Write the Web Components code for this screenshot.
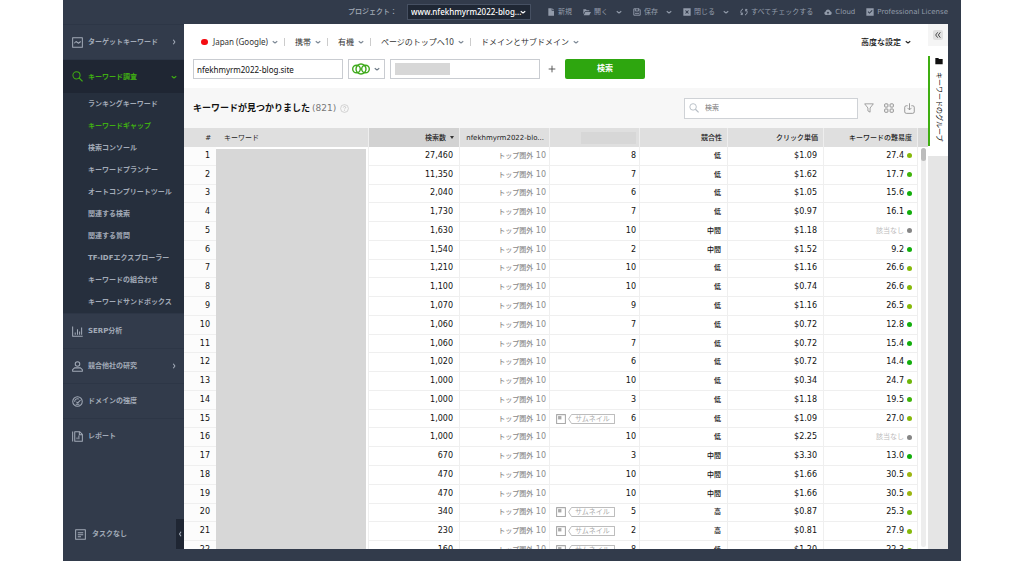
<!DOCTYPE html>
<html lang="ja">
<head>
<meta charset="utf-8">
<title>キーワードギャップ</title>
<style>
  html, body { height: 100%; margin: 0; }
  body {
    --narrow: "Noto Sans", "Noto Sans CJK JP", sans-serif;
    background: #fff;
    font-family: "DejaVu Sans", "Noto Sans CJK JP", sans-serif;
    font-size: 8px;
    line-height: 12px;
    overflow: hidden;
  }
</style>
</head>
<body>
<seo-app></seo-app>
<script>
const S = (w, body, extra = '') =>
  `<svg width="${w}" height="${w}" viewBox="0 0 12 12" fill="none" stroke="currentColor" stroke-width="1.1" stroke-linejoin="round" ${extra}>${body}</svg>`;
const ICONS = {
  down: '<path d="M1.500 4.500 6 8l4.500-3.500" stroke-width="2.200"/>',
  right: '<path d="M4.500 1.500 7.800 6l-3.300 4.500" stroke-width="2.200"/>',
  left: '<path d="M8 1.500 5 6l3 4.500" stroke-width="2.200"/>',
  target: '<rect x=".7" y=".7" width="10.600" height="10.600"/><path d="m2.500 6.800 1.900-1.900 2.700 1.900 2.400-1.900"/>',
  search: '<circle cx="4.900" cy="4.700" r="3.900"/><path d="m7.700 7.500 3.800 3.800" stroke-width="1.400"/>',
  serp: '<path d="M.7.5v10.800h11M3.500 9.500V7M6 9.500V3.500M8.300 9.500V6M10.500 9.500V1.500"/>',
  person: '<circle cx="6" cy="3.200" r="2.500"/><path d="M2.800 7.500h6.400l2.100 2v1.800H.7V9.500z"/>',
  gauge: '<circle cx="6" cy="6" r="5.200"/><path d="M3 6.500A3 3 0 0 1 7.500 3.400M9.300 4.500 6.200 7.600 4.800 6.400M4 9h4"/>',
  report: '<path d="M.7.5v11M3 .8h5.500l2.800 2.800v7.600H3zM8 1v3h3M5.500 9V7M7.500 9V5"/>',
  tasks: '<rect x=".7" y=".7" width="10.600" height="10.600"/><path d="M3 4h6M3 6.200h6M3 8.400h3.500"/>',
  file: '<path d="M2 .5h5v3.500h3.500v7.500H2z" fill="currentColor" stroke="none"/><path d="M8 .5 10.500 3H8z" fill="currentColor" stroke="none"/>',
  open: '<path d="M.5 2h4l1 1.500h4V5H3L.5 9.500zM3.500 6H12l-2.500 5H1z" fill="currentColor" stroke="none"/>',
  save: '<path d="M1.200 1.200h8l1.600 1.600v8H1.200z" stroke-width="1.400"/><path d="M3.500 1v3.500h5V1M3 8h6" stroke-width="1.400"/>',
  close: '<path fill="currentColor" fill-rule="evenodd" stroke="none" d="M.5.5h11v11H.5zM3.200 4.200 5 6 3.200 7.800l1 1L6 7l1.800 1.800 1-1L7 6l1.800-1.800-1-1L6 5 4.200 3.200z"/>',
  sync: '<path d="M4.500 1.500A4.600 4.600 0 0 0 3 9.500M1 9.700l2.500.3V7M7.500 10.500A4.600 4.600 0 0 0 9 2.500M11 2.300 8.500 2v3" stroke-width="1.500"/>',
  cloud: '<path fill="currentColor" fill-rule="evenodd" stroke="none" d="M3 10.500a2.700 2.700 0 0 1-.5-5.300 3.600 3.600 0 0 1 7-.2A2.800 2.800 0 0 1 9 10.500zM5.300 9.500h1.400V7.500H8L6 5.200 4 7.500h1.300z"/>',
  check: '<path fill="currentColor" fill-rule="evenodd" stroke="none" d="M.5.5h11v11H.5zM2.500 6 5.200 8.800 9.800 4 8.700 3 5.200 6.700 3.500 5z"/>',
  help: '<circle cx="6" cy="6" r="5.200" stroke-width=".8"/><path d="M4.400 4.800c0-2.200 3.300-2 3.200-.1C7.500 5.800 6 5.700 6 7.300M6 8.300v1" stroke-width=".9"/>',
  funnel: '<path d="M.8 1h10.400L7.300 6v5L4.700 9.500V6z" stroke-width=".9"/>',
  grid: '<rect x=".8" y="1" width="3.900" height="3.900" rx=".8"/><rect x="7.300" y="1" width="3.900" height="3.900" rx=".8"/><rect x=".8" y="7.200" width="3.900" height="3.900" rx=".8"/><rect x="7.300" y="7.200" width="3.900" height="3.900" rx=".8"/>',
  export: '<path d="M4 3H2.500A1.700 1.700 0 0 0 .8 4.700v5A1.700 1.700 0 0 0 2.500 11.300h7a1.700 1.700 0 0 0 1.700-1.600v-5A1.700 1.700 0 0 0 9.500 3H8M6 .3v7M3.800 5.300 6 7.500l2.200-2.200" stroke-width=".9"/>',
  folder: '<path d="M.5 1.500h4.500l1 1.500h5.500v8H.5z" fill="currentColor" stroke="none"/>',
  thumb: '<rect x=".7" y=".7" width="10.600" height="10.600" stroke-width="1.300"/><path d="M2.500 2.500h4v4h-4z" fill="currentColor" stroke="none"/>',
  plus: '<path d="M6 1v10M1 6h10" stroke-width="1.300"/>',
  dbl: '<path d="M5.500 2 2.500 6l3 4M9.500 2l-3 4 3 4" stroke-width="1.300"/>'
};
const BASE = `<style>
  *, *::before, *::after { box-sizing: border-box; }
  button, input, select { font: inherit; color: inherit; margin: 0; padding: 0; border: 0; background: none; border-radius: 0; }
  input { min-width: 0; outline: none; }
  a { color: inherit; text-decoration: none; }
</style>`;

function define(name, html) {
  customElements.define(name, class extends HTMLElement {
    constructor() {
      super();
      const root = this.attachShadow({ mode: 'open' });
      const t = document.createElement('template');
      t.innerHTML = BASE + (typeof html === 'function' ? html(this) : html);
      root.append(t.content.cloneNode(true));
    }
  });
}

customElements.define('ui-icon', class extends HTMLElement {
  connectedCallback() {
    if (this.shadowRoot) return;
    const size = this.getAttribute('size') || 10;
    this.attachShadow({ mode: 'open' }).innerHTML =
      `<style>:host{display:inline-flex;flex:none}svg{display:block}</style>` +
      S(size, ICONS[this.getAttribute('name')], 'aria-hidden="true"');
  }
});

define('top-bar', `
<style>
  :host { display: flex; align-items: center; justify-content: flex-end; height: 24px; padding-right: 13px; color: #a3abb8; font-size: 7px; }
  .project { display: flex; align-items: center; gap: 10px; margin-right: 16px; font-weight: 500; }
  .picker { display: grid; align-items: center; width: 124px; height: 16px; background: #1f2734; border: 1px solid #465062; color: #fff; }
  select, .picker ui-icon { grid-area: 1 / 1; }
  select { appearance: none; width: 100%; height: 14px; padding-left: 3px; font-family: var(--narrow); font-size: 8px; }
  .picker ui-icon { justify-self: end; margin-right: 4px; pointer-events: none; }
  nav { display: flex; align-items: center; color: #929baa; }
  button, a { display: flex; align-items: center; gap: 3px; white-space: nowrap; }
  .mr { margin-right: 11px; } .sm { margin-right: 8px; }
</style>
<div class="project"><label for="p">プロジェクト：</label>
  <div class="picker"><select id="p"><option>www.nfekhmyrm2022-blog...</option></select><ui-icon name="down" size="6"></ui-icon></div></div>
<nav>
  <button class="mr"><ui-icon name="file" size="8"></ui-icon>新規</button>
  <button class="sm"><ui-icon name="open" size="8"></ui-icon>開く</button>
  <button class="mr" aria-label="開くメニュー"><ui-icon name="down" size="6"></ui-icon></button>
  <button class="sm"><ui-icon name="save" size="8"></ui-icon>保存</button>
  <button class="mr" aria-label="保存メニュー"><ui-icon name="down" size="6"></ui-icon></button>
  <button class="sm"><ui-icon name="close" size="8"></ui-icon>閉じる</button>
  <button class="mr" aria-label="閉じるメニュー"><ui-icon name="down" size="6"></ui-icon></button>
  <button class="mr"><ui-icon name="sync" size="8"></ui-icon>すべてチェックする</button>
  <a class="mr" href="#cloud"><ui-icon name="cloud" size="8"></ui-icon>Cloud</a>
  <a href="#license"><ui-icon name="check" size="8"></ui-icon>Professional License</a>
</nav>`);

define('side-item', el => `
<style>
  :host { display: block; height: 35px; border-top: 1px solid #2d3646; color: #a3abb8; font-weight: 700; }
  :host([open]) { height: 34px; background: #1f2633; color: #3fae12; }
  a { display: flex; align-items: center; height: 100%; gap: 5px; padding: 0 7px 0 9px; }
  .arrow { margin-left: auto; }
</style>
<a href="#section"><ui-icon name="${el.getAttribute('icon')}" size="11"></ui-icon><slot></slot>${
  el.hasAttribute('arrow') ? `<ui-icon class="arrow" size="6" name="${el.getAttribute('arrow')}"></ui-icon>` : ''}</a>`);

define('side-menu', `
<style>
  :host { display: flex; flex-direction: column; color: #a3abb8; font-size: 7px; }
  ul { list-style: none; margin: 0; padding: 0; background: #262f3d; font-weight: 700; }
  li a { display: flex; align-items: center; height: 22px; padding-left: 25px; white-space: nowrap; }
  .on { color: #3fae12; }
  footer { display: flex; align-items: center; justify-content: space-between; height: 30px; margin-top: auto; padding-left: 12px; font-weight: 700; }
  footer a { display: flex; align-items: center; gap: 6px; }
  footer button { display: flex; align-items: center; justify-content: center; width: 8px; height: 30px; background: #1f2633; }
</style>
<side-item icon="target" arrow="right">ターゲットキーワード</side-item>
<side-item icon="search" arrow="down" open>キーワード調査</side-item>
<ul>${['ランキングキーワード', 'キーワードギャップ', '検索コンソール', 'キーワードプランナー', 'オートコンプリートツール', '関連する検索', '関連する質問', 'TF-IDFエクスプローラー', 'キーワードの組合わせ', 'キーワードサンドボックス']
  .map((t, i) => `<li><a href="#tool"${i === 1 ? ' class="on" aria-current="page"' : ''}>${t}</a></li>`).join('')}</ul>
<side-item icon="serp">SERP分析</side-item>
<side-item icon="person" arrow="right">競合他社の研究</side-item>
<side-item icon="gauge">ドメインの強度</side-item>
<side-item icon="report">レポート</side-item>
<footer><a href="#tasks"><ui-icon name="tasks" size="11"></ui-icon>タスクなし</a>
<button aria-label="メニューを閉じる"><ui-icon name="left" size="6"></ui-icon></button></footer>`);

define('filter-bar', `
<style>
  :host { display: flex; align-items: center; height: 35px; padding: 0 17px; color: #333; font-family: var(--narrow); }
  button { display: flex; align-items: center; gap: 4px; white-space: nowrap; }
  button ui-icon { color: #7b8794; }
  i { width: 1px; height: 8px; margin: 0 10px 0 6px; background: #ccc; }
  .flag { width: 7px; height: 6px; margin-right: 1px; border-radius: 3px; background: #f40d12; }
  .adv { margin-left: auto; font-weight: 500; color: #111; }
  .adv ui-icon { color: #222; }
</style>
<button><span class="flag"></span>Japan (Google)<ui-icon name="down" size="6"></ui-icon></button><i></i>
<button>携帯<ui-icon name="down" size="6"></ui-icon></button><i></i>
<button>有機<ui-icon name="down" size="6"></ui-icon></button><i></i>
<button>ページのトップへ10<ui-icon name="down" size="6"></ui-icon></button><i></i>
<button>ドメインとサブドメイン<ui-icon name="down" size="6"></ui-icon></button>
<button class="adv">高度な設定<ui-icon name="down" size="6"></ui-icon></button>`);

define('domain-form', `
<style>
  :host { display: block; padding: 0 9px 9px; }
  form { display: flex; align-items: center; gap: 5px; }
  .box { height: 20px; border: 1px solid #c9ccd1; background: #fff; }
  input.box { width: 150px; padding: 0 3px; color: #111; font-family: var(--narrow); }
  .mode { display: flex; align-items: center; justify-content: space-between; width: 37px; padding: 0 4px 0 3px; color: #6b7885; }
  .mode svg { display: block; }
  .other { display: flex; align-items: center; width: 150px; padding-left: 4px; }
  .mask { width: 55px; height: 12px; background: #d7d7d7; }
  .other input { flex: 1; }
  .add { display: flex; margin: 0 4px 0 3px; color: #444; }
  .go { width: 80px; height: 20px; border-radius: 2px; background: #2ea60f; color: #fff; font-weight: 700; }
</style>
<form onsubmit="return false">
  <input class="box" aria-label="ドメイン" value="nfekhmyrm2022-blog.site">
  <button type="button" class="box mode" aria-label="比較モード">
    <svg width="18" height="12" viewBox="0 0 18 12" fill="none" stroke="#3faa1c" stroke-width="1.400"><circle cx="4.500" cy="6" r="3.800"/><circle cx="13.500" cy="6" r="3.800"/><circle cx="9" cy="6" r="5"/></svg>
    <ui-icon name="down" size="6"></ui-icon></button>
  <div class="box other"><span class="mask"></span><input aria-label="競合ドメイン"></div>
  <button type="button" class="add" aria-label="追加"><ui-icon name="plus" size="8"></ui-icon></button>
  <button class="go">検索</button>
</form>`);

define('result-bar', `
<style>
  :host { display: flex; align-items: center; height: 40px; padding: 0 13px 0 9px; background: #f7f7f7; color: #888; }
  h1 { margin: 0; font-size: 9px; font-weight: 700; color: #111; }
  .count { margin: 0 4px 0 2px; font-size: 9px; color: #777; }
  .help { color: #bbb; }
  .find { display: flex; align-items: center; gap: 6px; width: 174px; height: 21px; margin-left: auto; padding: 0 4px; background: #fff; border: 1px solid #cfd2d6; color: #b5bcc4; }
  .find input { flex: 1; color: #555; font-size: 7px; }
  .find input::placeholder { color: #777; }
  .tools { display: flex; gap: 10px; margin-left: 6px; }
  button { display: flex; }
</style>
<h1>キーワードが見つかりました</h1><span class="count">(821)</span><ui-icon class="help" name="help" size="9"></ui-icon>
<label class="find"><ui-icon name="search" size="10"></ui-icon><input type="search" placeholder="検索" aria-label="検索"></label>
<div class="tools">
  <button aria-label="フィルター"><ui-icon name="funnel" size="10"></ui-icon></button>
  <button aria-label="表示"><ui-icon name="grid" size="10"></ui-icon></button>
  <button aria-label="エクスポート"><ui-icon name="export" size="11"></ui-icon></button>
</div>`);

const ROWS = `27,460|8|低|$1.09|27.4
11,350|7|低|$1.62|17.7
2,040|6|低|$1.05|15.6
1,730|7|低|$0.97|16.1
1,630|10|中間|$1.18|
1,540|2|中間|$1.52|9.2
1,210|10|低|$1.16|26.6
1,100|10|低|$0.74|26.6
1,070|9|低|$1.16|26.5
1,060|7|低|$0.72|12.8
1,060|7|低|$0.72|15.4
1,020|6|低|$0.72|14.4
1,000|10|低|$0.34|24.7
1,000|3|低|$1.18|19.5
1,000|6*|低|$1.09|27.0
1,000|10|低|$2.25|
670|3|中間|$3.30|13.0
470|10|中間|$1.66|30.5
470|10|中間|$1.66|30.5
340|5*|高|$0.87|25.3
230|2*|高|$0.81|27.9
160|8*|低|$1.20|22.3`.split('\n').map(r => r.split('|'));

const dot = v => !v ? '#858585' : v > 29 ? '#9cb512' : v > 26 ? '#86b90a' : v > 22 ? '#6fb50a' : v > 17 ? '#3fb30a' : '#12ad0c';
const TAG = `<span class="tag"><ui-icon name="thumb" size="10"></ui-icon><span class="chip"><svg width="5" height="10" viewBox="0 0 5 10" fill="#fff" stroke="#bdbdbd"><path d="M5 .5H3.500L.6 5l2.900 4.500H5"/></svg><span class="lbl">サムネイル</span></span></span>`;

define('keyword-table', `
<style>
  :host { display: flex; min-height: 0; overflow: hidden; }
  .view { flex: 1; overflow: hidden; }
  table { width: 100%; height: calc(100% + 11px); border-collapse: separate; border-spacing: 0; table-layout: fixed; color: #111; }
  th, td { padding: 0 6px 0 0; text-align: right; white-space: nowrap; line-height: 12px; overflow: hidden; }
  th { height: 19px; padding-right: 5px; background: #dfdfdf; border-right: 1px solid #eee; font-size: 7px; font-weight: 500; color: #222; }
  th:nth-child(1) { border-right: 0; }
  th:nth-child(2) { text-align: left; padding-left: 8px; font-weight: 400; }
  th.sort { background: #d2d2d2; }
  th.sort button { display: inline-flex; align-items: center; gap: 4px; font-weight: 500; }
  th.sort i { border: 2px solid transparent; border-top: 3px solid #333; border-bottom: 0; }
  td { border-right: 1px solid #efefef; border-bottom: 1px solid #efefef; font-weight: 400; }
  td.n { background: #fcfcfc; border-right: 0; }
  td.mask { padding: 2px 2px 0 0; border-bottom: 0; }
  td.mask div { height: 100%; background: #d7d7d7; }
  td.rank { padding-right: 3px; color: #8c8c8c; }
  td.pos, th.pos { padding-right: 3px; }
  .posrow { display: flex; align-items: center; justify-content: space-between; padding-left: 6px; }
  .head-mask { display: inline-block; width: 55px; height: 12px; vertical-align: middle; background: #d7d7d7; }
  .cjk { font-size: 7px; font-weight: 500; }
  td.last { padding-right: 5px; }
  .kd { display: flex; align-items: center; justify-content: flex-end; gap: 3px; }
  .kd i { width: 5px; height: 5px; border-radius: 50%; }
  .na { color: #bdbdbd; font-size: 7px; }
  .tag { display: flex; align-items: center; gap: 2px; color: #aaa; font-size: 7px; }
  .chip { display: flex; height: 10px; }
  .chip svg { display: block; }
  .lbl { height: 10px; line-height: 8px; padding: 0 4px 0 2px; border: 1px solid #bdbdbd; border-left: 0; border-radius: 0 1px 1px 0; }
  .scroll { width: 10px; background: linear-gradient(#d8d8d8 0 19px, #fff 19px); padding: 20px 2px 2px 3px; }
  .scroll div { height: 100%; border-radius: 3px; background: #ededed; }
  .scroll b { display: block; height: 13px; border-radius: 3px; background: #bcbcbc; }
</style>
<div class="view"><table>
<colgroup><col style="width:32px"><col><col style="width:91px"><col style="width:90px"><col style="width:90px"><col style="width:88px"><col style="width:96px"><col style="width:94px"></colgroup>
<thead><tr><th>#</th><th>キーワード</th><th class="sort"><button>検索数<i></i></button></th><th>nfekhmyrm2022-blo...</th><th class="pos"><span class="head-mask"></span></th><th>競合性</th><th>クリック単価</th><th>キーワードの難易度</th></tr></thead>
<tbody>${ROWS.map(([vol, pos, comp, cpc, kd], i) => `<tr><td class="n">${i + 1}</td>${
  i ? '' : `<td class="mask" rowspan="${ROWS.length}"><div></div></td>`
}<td>${vol}</td><td class="rank"><span class="cjk">トップ圏外</span> 10</td><td class="pos">${
  pos.endsWith('*') ? `<div class="posrow">${TAG}<span>${pos.slice(0, -1)}</span></div>` : pos
}</td><td><span class="cjk">${comp}</span></td><td>${cpc}</td><td class="last"><div class="kd">${
  kd ? kd : '<span class="na">該当なし</span>'}<i style="background:${dot(kd)}"></i></div></td></tr>`).join('')}</tbody>
</table></div>
<div class="scroll"><div><b></b></div></div>`);

define('group-rail', `
<style>
  :host { display: flex; flex-direction: column; background: #e5e5e5; }
  .top { display: flex; align-items: center; justify-content: center; height: 22px; background: #f5f5f5; }
  .top button { display: flex; align-items: center; justify-content: center; width: 10px; height: 10px; border-radius: 2px; background: #e0e0e0; color: #333; }
  .pad { background: #fff; padding: 10px 0; }
  .tab { display: flex; flex-direction: column; align-items: center; gap: 7px; width: 100%; height: 90px; padding: 1px 1px 0 0; border-left: 2px solid #3fae12; color: #111; font-size: 7px; }
  .tab span { writing-mode: vertical-rl; text-orientation: sideways; white-space: nowrap; }
</style>
<div class="top"><button aria-label="開く"><ui-icon name="dbl" size="8"></ui-icon></button></div>
<div class="pad"><button class="tab"><ui-icon name="folder" size="8"></ui-icon><span>キーワードのグループ</span></button></div>`);

define('seo-app', `
<style>
  :host { display: grid; grid-template: 24px minmax(0, 1fr) 12px / 121px minmax(0, 1fr) 20px 13px; height: 100%; margin: 0 63px; background: #323b4b; }
  top-bar { grid-column: 1 / -1; }
  main { display: flex; flex-direction: column; min-height: 0; background: #fff; }
  keyword-table { flex: 1; }
</style>
<top-bar></top-bar>
<side-menu></side-menu>
<main>
  <filter-bar></filter-bar>
  <domain-form></domain-form>
  <result-bar></result-bar>
  <keyword-table></keyword-table>
</main>
<group-rail></group-rail>`);
</script>
</body>
</html>
